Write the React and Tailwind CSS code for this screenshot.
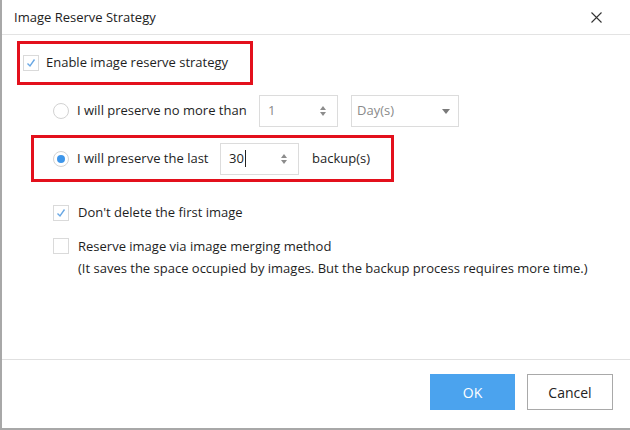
import React from 'react';

const font = { fontFamily: '"Open Sans", "Noto Sans", Arial, sans-serif' };

function CheckBox({ checked }) {
  return (
    <div className="w-[16px] h-[16px] shrink-0 border border-[#dadada] bg-white flex items-center justify-center">
      {checked && (
        <svg width="10" height="10" viewBox="0 0 10 10">
          <polyline points="1.5,5.5 4,8 8.5,1.5" fill="none" stroke="#6aa8e4" strokeWidth="1.4" />
        </svg>
      )}
    </div>
  );
}

function Radio({ checked }) {
  return (
    <div className="w-[16px] h-[16px] shrink-0 rounded-full border border-[#d2d2d2] bg-white flex items-center justify-center">
      {checked && <div className="w-[8px] h-[8px] rounded-full bg-[#3e96ea]" />}
    </div>
  );
}

function SpinArrows() {
  return (
    <div className="flex flex-col items-center gap-[2px]">
      <div className="w-0 h-0 border-l-[3px] border-r-[3px] border-b-[4px] border-l-transparent border-r-transparent border-b-[#8c8c8c]" />
      <div className="w-0 h-0 border-l-[3px] border-r-[3px] border-t-[4px] border-l-transparent border-r-transparent border-t-[#8c8c8c]" />
    </div>
  );
}

function Spinbox({ value, active }) {
  return (
    <div className="w-[79px] h-[32px] shrink-0 border border-[#dcdcdc] bg-white flex items-center justify-between pl-[8px] pr-[11px]">
      <div className="flex items-center">
        <span className={active ? 'text-[#222]' : 'text-[#8a8a8a]'}>{value}</span>
        {active && <span className="w-px h-[17px] bg-[#222] ml-[1px]" />}
      </div>
      <SpinArrows />
    </div>
  );
}

export default function App() {
  return (
    <div style={font} className="w-[630px] h-[430px] bg-white border-l-[2px] border-b-[2px] border-[#a8a8a8] flex flex-col text-[13px] text-[#1e1e1e]">
      {/* header */}
      <div className="h-[35px] shrink-0 border-b border-[#e3e3e3] flex items-center justify-between pl-[12px] pr-[28px]">
        <span className="text-[13px] text-[#222] mt-[1px]">Image Reserve Strategy</span>
        <svg width="11" height="11" viewBox="0 0 11 11">
          <path d="M0.5 0.5 L10.5 10.5 M10.5 0.5 L0.5 10.5" stroke="#333" strokeWidth="1.1" />
        </svg>
      </div>

      {/* body */}
      <div className="flex flex-col">
        <div className="mt-[6px] ml-[15px] w-[236px] h-[44px] border-[3px] border-[#e3101c] flex items-center pl-[3px] gap-[7px]">
          <CheckBox checked />
          <span>Enable image reserve strategy</span>
        </div>

        <div className="mt-[10px] ml-[51px] h-[32px] flex items-center">
          <Radio />
          <span className="ml-[8px] w-[182px]">I will preserve no more than</span>
          <Spinbox value="1" />
          <div className="ml-[13px] w-[108px] h-[32px] border border-[#dcdcdc] flex items-center justify-between pl-[5px] pr-[8px]">
            <span className="text-[#8a8a8a]">Day(s)</span>
            <div className="w-0 h-0 border-l-[4px] border-r-[4px] border-t-[5px] border-l-transparent border-r-transparent border-t-[#7a7a7a]" />
          </div>
        </div>

        <div className="mt-[8px] ml-[29px] w-[363px] h-[47px] border-[3px] border-[#e3101c] flex items-center pl-[19px]">
          <Radio checked />
          <span className="ml-[8px] w-[143px]">I will preserve the last</span>
          <Spinbox value="30" active />
          <span className="ml-[13px]">backup(s)</span>
        </div>

        <div className="mt-[22px] ml-[51px] h-[18px] flex items-center gap-[9px]">
          <CheckBox checked />
          <span>Don't delete the first image</span>
        </div>

        <div className="mt-[13px] ml-[51px] flex items-start gap-[9px]">
          <div className="mt-[3px]">
            <CheckBox />
          </div>
          <div className="leading-[22px]">
            <div>Reserve image via image merging method</div>
            <div>(It saves the space occupied by images. But the backup process requires more time.)</div>
          </div>
        </div>
      </div>

      {/* footer */}
      <div className="mt-auto h-[69px] shrink-0 border-t border-[#e0e0e0] flex justify-end items-start pt-[14px] pr-[17px] gap-[12px]">
        <button className="w-[85px] h-[36px] bg-[#4ba3ee] text-white text-[14px]">OK</button>
        <button className="w-[86px] h-[36px] border border-[#a9a9a9] bg-white text-[#222] text-[14px]">Cancel</button>
      </div>
    </div>
  );
}
